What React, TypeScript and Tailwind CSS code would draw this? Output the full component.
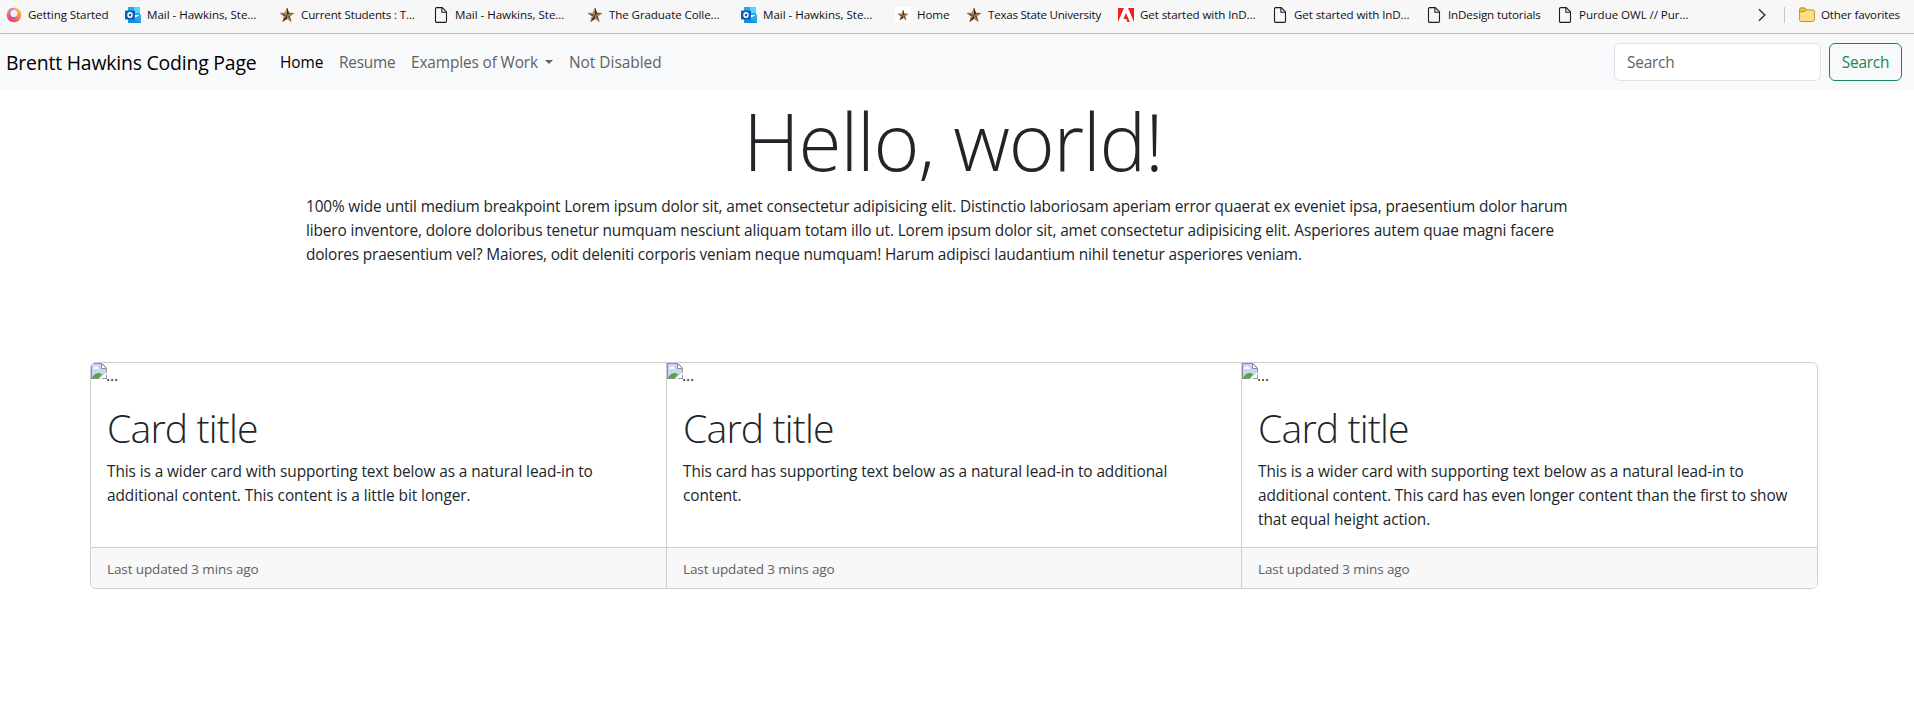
import type { ReactNode } from "react";

function FirefoxIcon() {
  return (
    <svg viewBox="0 0 16 16" className="size-4 shrink-0">
      <defs>
        <linearGradient id="ff" x1="0.9" y1="0" x2="0.3" y2="1">
          <stop offset="0" stopColor="#ffc83c" />
          <stop offset="0.5" stopColor="#ff8a3d" />
          <stop offset="1" stopColor="#f5306b" />
        </linearGradient>
        <linearGradient id="ffin" x1="0.2" y1="1" x2="0.8" y2="0">
          <stop offset="0" stopColor="#8a4df0" />
          <stop offset="1" stopColor="#c9b4f8" />
        </linearGradient>
      </defs>
      <circle cx="8" cy="8" r="7.300" fill="url(#ff)" />
      <circle cx="7.300" cy="7" r="4.500" fill="url(#ffin)" />
      <circle cx="7.900" cy="6.500" r="3.500" fill="#f1eefc" />
      <path d="M2.600 3.200C4.200 1.200 6.500.6 9 .9c-2.300.6-4.200 1.700-5 4Z" fill="#d07be0" />
    </svg>
  );
}

function OutlookIcon() {
  return (
    <svg viewBox="0 0 16 16" className="size-4 shrink-0">
      <rect x="3" y="0" width="12" height="8" fill="#28a8ea" />
      <rect x="9" y="0" width="6" height="6" fill="#50d9ff" />
      <rect x="3" y="4" width="6" height="5" fill="#0364b8" />
      <path d="M3 8l6.500 4L16 7.500V16H3Z" fill="#1490df" />
      <path d="M16 7.500V16L8.500 11.500Z" fill="#28a8ea" />
      <rect x="0" y="3.500" width="10" height="9" rx="0.800" fill="#0f5fb5" />
      <ellipse cx="5" cy="8" rx="2" ry="2.200" fill="none" stroke="#fff" strokeWidth="1.400" />
    </svg>
  );
}

function StarShape() {
  return (
    <>
      <path d="M8 .5l1.900 5.300 5.600.1-4.500 3.400 1.600 5.700L8 11.800 3.400 15 5 9.300.5 5.900l5.600-.1Z" fill="#6b4a35" />
      <path d="M8 .5V8L6.100 5.800ZM15.500 5.900 8 8l3 1.300ZM12.600 15 8 8v3.800ZM3.400 15 8 8 5 9.300ZM.5 5.900 8 8 6.100 5.800Z" fill="#b08f5c" />
      <path d="M8 .5V8l1.900-2.200ZM3.400 15 8 8v3.800Z" fill="#3a2620" />
    </>
  );
}

function StarIcon() {
  return (
    <svg viewBox="0 0 16 16" className="size-4 shrink-0">
      <StarShape />
    </svg>
  );
}

function BoxedStarIcon() {
  return (
    <svg viewBox="0 0 16 16" className="size-4 shrink-0">
      <rect width="16" height="16" fill="#fff" />
      <g transform="translate(2.200 2.400) scale(0.730)">
        <StarShape />
      </g>
    </svg>
  );
}

function DocIcon() {
  return (
    <svg viewBox="0 0 16 16" className="size-4 shrink-0" fill="none" stroke="#1b1b1b" strokeWidth="1.100">
      <path d="M3.700.6h5.500l4.300 4.300v9.300c0 .7-.5 1.200-1.200 1.200H3.700c-.7 0-1.200-.5-1.200-1.200V1.800C2.500 1.100 3 .6 3.700.6" />
      <path d="M8.900.8v4.400h4.500" />
    </svg>
  );
}

function AdobeIcon() {
  return (
    <svg viewBox="0 0 16 16" className="size-4 shrink-0">
      <rect width="16" height="16" fill="#fff" />
      <path d="M0 1h6L0 15ZM10 1h6v14ZM8 6l3.900 9H9.300l-1.100-2.900H5.300Z" fill="#ed2224" />
    </svg>
  );
}

function FolderIcon() {
  return (
    <svg viewBox="0 0 16 16" className="size-4 shrink-0" stroke="#c1902b">
      <path d="M.6 3c0-1.300.6-2 1.700-2h2.900c.7 0 1 .2 1.400.7l1 1.200h6.200c1 0 1.600.6 1.600 1.600v8.400c0 1-.6 1.600-1.600 1.600H2.200c-1 0-1.600-.6-1.600-1.600Z" fill="#ffdf80" />
      <path d="M.6 4.700V3c0-1.300.6-2 1.700-2h2.900c.7 0 1 .2 1.400.7l.8 1-1.300 1.500c-.3.300-.6.500-1.100.5Z" fill="#f5c325" />
    </svg>
  );
}

function BrokenImageIcon() {
  return (
    <svg viewBox="0 0 16 16" className="size-4 shrink-0">
      <path d="M0 0h11l5 5v6L10 16H0Z" fill="#c5d6f6" />
      <path d="M2 5.500c0-1 .8-1.500 1.600-1.300C4 3 6.600 3 6.900 4.500c.9 0 1.200 1.500.1 1.500H2.600Z" fill="#fff" />
      <path d="M1 15c1.500-3.500 4-5 6.500-5 1.500 0 2.700.6 3.700 1.600L8 15Z" fill="#56a934" />
      <path d="M.5 16V.5h10.300l4.700 4.700V9M0 15.500h8M11 15.500h4.500V12" fill="none" stroke="#8e8e8e" />
      <path d="M10.500.5v5h5Z" fill="#fff" stroke="#8e8e8e" />
      <path d="M15 9.500 8.500 16h2.300L15 12Z" fill="#fff" />
    </svg>
  );
}

function Bookmark({ icon, label, box, text }: { icon: ReactNode; label: string; box: string; text: string }) {
  return (
    <div className={`flex shrink-0 items-center ${box}`}>
      {icon}
      <span className={`whitespace-nowrap ${text}`}>{label}</span>
    </div>
  );
}

function BookmarksBar() {
  return (
    <div className="flex h-[34px] items-center border-b border-[#b9babd] bg-[#f7f7f7] pb-[3px] pl-1.5 text-[11.6px] leading-4 text-[#111]">
      <Bookmark icon={<FirefoxIcon />} label="Getting Started" box="w-[119px]" text="ml-1.5 tracking-[-0.1px]" />
      <Bookmark icon={<OutlookIcon />} label="Mail - Hawkins, Ste..." box="w-[154px]" text="ml-1.5 tracking-[-0.04px]" />
      <Bookmark icon={<StarIcon />} label="Current Students : T..." box="w-[154px]" text="ml-1.5 tracking-[-0.15px]" />
      <Bookmark icon={<DocIcon />} label="Mail - Hawkins, Ste..." box="w-[154px]" text="ml-1.5 tracking-[-0.04px]" />
      <Bookmark icon={<StarIcon />} label="The Graduate Colle..." box="w-[154px]" text="ml-1.5 tracking-[-0.11px]" />
      <Bookmark icon={<OutlookIcon />} label="Mail - Hawkins, Ste..." box="w-[154px]" text="ml-1.5 tracking-[-0.04px]" />
      <Bookmark icon={<BoxedStarIcon />} label="Home" box="w-[71px]" text="ml-1.5 tracking-[-0.1px]" />
      <Bookmark icon={<StarIcon />} label="Texas State University" box="w-[152px]" text="ml-1.5 tracking-[-0.25px]" />
      <Bookmark icon={<AdobeIcon />} label="Get started with InD..." box="w-[154px]" text="ml-1.5 tracking-[-0.1px]" />
      <Bookmark icon={<DocIcon />} label="Get started with InD..." box="w-[154px]" text="ml-1.5 tracking-[-0.1px]" />
      <Bookmark icon={<DocIcon />} label="InDesign tutorials" box="w-[131px]" text="ml-1.5 tracking-[-0.13px]" />
      <Bookmark icon={<DocIcon />} label="Purdue OWL // Pur..." box="w-[201px]" text="ml-1.5 tracking-[-0.07px]" />
      <svg viewBox="0 0 8 14" className="h-3.5 w-2 shrink-0" fill="none" stroke="#333" strokeWidth="1.500">
        <path d="M1 1.200 6.800 7 1 12.800" />
      </svg>
      <div className="ml-[18px] h-4 w-px bg-[#c8c8c8]" />
      <Bookmark icon={<FolderIcon />} label="Other favorites" box="ml-[14px]" text="ml-1.5 tracking-[-0.17px]" />
    </div>
  );
}

function Navbar() {
  return (
    <nav className="flex h-14 items-center bg-[#f8f9fb] pr-3 pl-1.5 text-[15.4px] leading-6 text-[#616263]">
      <a className="w-[274px] pt-0.5 whitespace-nowrap text-[19.4px] leading-[30px] tracking-[-0.19px] text-black">Brentt Hawkins Coding Page</a>
      <a className="w-[59px] pt-0.5 text-black">Home</a>
      <a className="w-[72px] pt-0.5 tracking-[-0.25px]">Resume</a>
      <a className="flex w-[158px] items-center pt-0.5 whitespace-nowrap tracking-[-0.13px]">
        Examples of Work
        <span className="mb-0.5 ml-[7px] border-x-[4.8px] border-t-[4.8px] border-x-transparent border-t-[#616263]" />
      </a>
      <a className="pt-0.5">Not Disabled</a>
      <form className="ml-auto flex gap-2">
        <input
          placeholder="Search"
          className="h-[38px] w-[207px] rounded-md border border-[#dee2e6] bg-white px-3 tracking-[-0.2px] placeholder:text-[#616263]"
        />
        <button type="button" className="h-[38px] w-[73px] rounded-md border border-[#198754] pt-0.5 tracking-[-0.2px] text-[#198754]">
          Search
        </button>
      </form>
    </nav>
  );
}

type Line = { text: string; tracking: string };

function Card({ lines, box }: { lines: Line[]; box: string }) {
  return (
    <article className={`flex flex-col ${box}`}>
      <div className="flex h-6 items-start">
        <BrokenImageIcon />
        <span className="-ml-px pt-px leading-6">...</span>
      </div>
      <div className="flex-1 px-4 pt-4 pb-[15px]">
        <h2 className="mb-2 h-12 pt-px text-[39.2px] leading-[48px] font-light tracking-[-0.85px]">Card title</h2>
        <p className="pt-px">
          {lines.map((l) => (
            <span key={l.text} className={`block whitespace-nowrap ${l.tracking}`}>{l.text}</span>
          ))}
        </p>
      </div>
      <footer className="h-[41px] border-t border-[#cfcfcf] bg-[#f8f8f8] px-4 pt-[9px] text-[13.5px] leading-6 tracking-[-0.11px] text-[#5e6063]">
        Last updated 3 mins ago
      </footer>
    </article>
  );
}

export default function App() {
  return (
    <div className="min-h-[726px] bg-white font-['Open_Sans',sans-serif] text-[15.4px] leading-6 text-[#212529]">
      <BookmarksBar />
      <Navbar />
      <main>
        <h1 className="mb-2 h-24 pt-[3px] pr-2 text-center text-[78.4px] leading-[96px] font-light tracking-[-1.15px]">Hello, world!</h1>
        <p className="ml-[306px] h-[72px] pt-px">
          <span className="block whitespace-nowrap tracking-[-0.154px]">
            100% wide until medium breakpoint Lorem ipsum dolor sit, amet consectetur adipisicing elit. Distinctio laboriosam aperiam error quaerat ex eveniet ipsa, praesentium dolor harum
          </span>
          <span className="block whitespace-nowrap tracking-[-0.138px]">
            libero inventore, dolore doloribus tenetur numquam nesciunt aliquam totam illo ut. Lorem ipsum dolor sit, amet consectetur adipisicing elit. Asperiores autem quae magni facere
          </span>
          <span className="block whitespace-nowrap tracking-[-0.158px]">
            dolores praesentium vel? Maiores, odit deleniti corporis veniam neque numquam! Harum adipisci laudantium nihil tenetur asperiores veniam.
          </span>
        </p>
        <section className="mt-24 ml-[90px] grid h-[227px] w-[1728px] grid-cols-[575px_575px_576px] overflow-hidden rounded-md border border-[#cfcfcf]">
          <Card
            box=""
            lines={[
              { text: "This is a wider card with supporting text below as a natural lead-in to", tracking: "tracking-[-0.09px]" },
              { text: "additional content. This content is a little bit longer.", tracking: "tracking-[-0.06px]" },
            ]}
          />
          <Card
            box="border-l border-[#cfcfcf]"
            lines={[
              { text: "This card has supporting text below as a natural lead-in to additional", tracking: "tracking-[-0.09px]" },
              { text: "content.", tracking: "tracking-[-0.1px]" },
            ]}
          />
          <Card
            box="border-l border-[#cfcfcf]"
            lines={[
              { text: "This is a wider card with supporting text below as a natural lead-in to", tracking: "tracking-[-0.09px]" },
              { text: "additional content. This card has even longer content than the first to show", tracking: "tracking-[-0.11px]" },
              { text: "that equal height action.", tracking: "tracking-[-0.08px]" },
            ]}
          />
        </section>
      </main>
    </div>
  );
}
